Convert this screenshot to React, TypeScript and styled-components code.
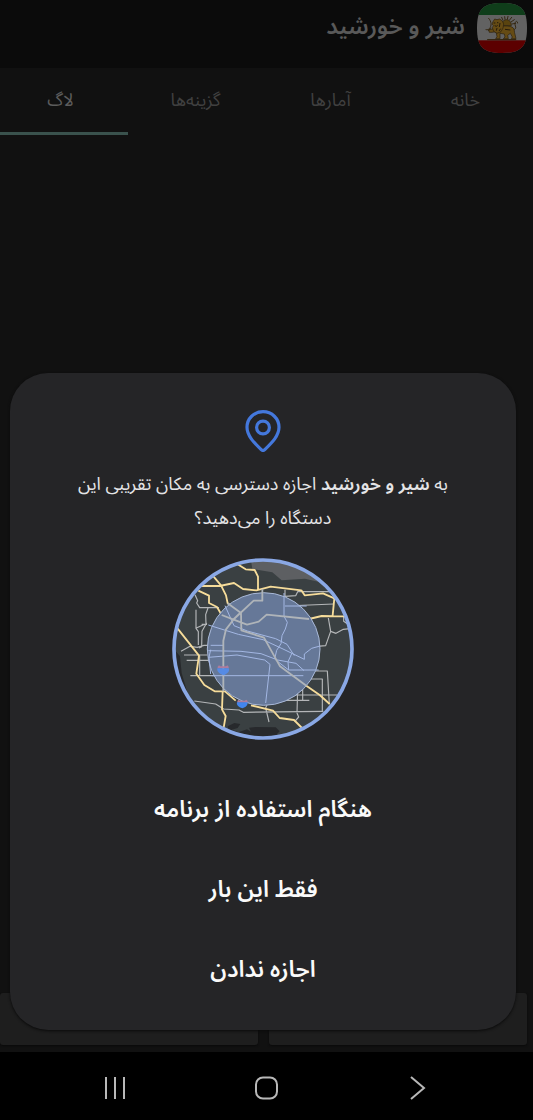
import React from "react";
import styled, { createGlobalStyle } from "styled-components";

const GlobalStyle = createGlobalStyle`
  * { box-sizing: border-box; }
  body {
    margin: 0;
    background: #111111;
    font-family: "Noto Sans Arabic", "Noto Sans", "DejaVu Sans", sans-serif;
  }
`;

const Screen = styled.div`
  position: relative;
  display: flex;
  flex-direction: column;
  min-height: 100vh;
  overflow: hidden;
  background: #111111;
`;

const AppBar = styled.header`
  display: flex;
  align-items: flex-start;
  gap: 12px;
  height: 68px;
  padding: 3px 6px 0;
  background: #0b0b0b;
`;

const AppTitle = styled.h1`
  margin: 0;
  font-size: 23px;
  line-height: 48px;
  font-weight: 600;
  color: #595959;
`;

const Tabs = styled.nav`
  display: grid;
  grid-template-columns: repeat(4, 1fr);
  height: 67px;
  margin-left: -7px;
`;

const Tab = styled.button<{ $active?: boolean }>`
  border: 0;
  border-bottom: 3px solid ${(p) => (p.$active ? "#3a524d" : "transparent")};
  padding: 0;
  background: none;
  font: inherit;
  font-size: 18px;
  line-height: 24px;
  color: ${(p) => (p.$active ? "#5c5c5c" : "#404040")};
`;

const LogArea = styled.main`
  flex: 1;
`;

const Actions = styled.div`
  display: flex;
  gap: 11px;
  padding: 0 6px 7px 0;
`;

const ActionButton = styled.button`
  flex: 1;
  height: 52px;
  border: 0;
  border-radius: 3px;
  background: #1e1e1e;
  box-shadow: 0 1px 2px #0a0a0a;
`;

const NavBar = styled.footer`
  display: flex;
  justify-content: space-between;
  align-items: center;
  height: 68px;
  padding: 4px 94px 0;
  background: #000000;
`;

const NavButton = styled.button`
  display: flex;
  justify-content: center;
  width: 44px;
  padding: 0;
  border: 0;
  background: none;
`;

const Dialog = styled.section`
  position: absolute;
  left: 10px;
  right: 17px;
  bottom: 90px;
  display: flex;
  flex-direction: column;
  align-items: center;
  padding: 37px 40px 20px;
  border-radius: 38px;
  background: #252527;
  box-shadow: 0 1px 3px #0a0a0a;
`;

const Message = styled.p`
  margin: 15px 0 23px;
  max-width: 400px;
  font-size: 18px;
  line-height: 34px;
  text-align: center;
  color: #e4e4e6;

  strong { font-weight: 600; }
`;

const Choices = styled.div`
  display: flex;
  flex-direction: column;
  align-self: stretch;
  margin-top: 30px;
`;

const Choice = styled.button`
  height: 80px;
  padding: 0;
  border: 0;
  background: none;
  font: inherit;
  font-size: 23px;
  line-height: 32px;
  font-weight: 600;
  color: #fafafa;
`;

const Logo = () => (
  <svg width="50" height="50" viewBox="0 0 150 150" aria-hidden="true">
    <defs>
      <clipPath id="badge">
        <path d="M75 0C132 0 150 18 150 75S132 150 75 150 0 132 0 75 18 0 75 0Z" />
      </clipPath>
    </defs>
    <g clipPath="url(#badge)">
      <rect width="150" height="150" fill="#626262" />
      <rect width="150" height="36" fill="#0f3d1a" />
      <rect y="112" width="150" height="38" fill="#5c0000" />
    </g>
    <g fill="none" stroke="#352711" strokeWidth="3" strokeLinecap="round">
      <path d="M78 52l-4-9M84 49l-1-8M91 49l2-9M97 52l7-9M102 57l10-7M105 63l11-2" />
      <path d="M35 46c9 9 9 23 3 30-3 4-7 5-11 4M34 82l8-6" />
      <path d="M110 80c13-3 2-12 4-20 2-7 9-6 8 0" />
      <path d="M32 110h84" strokeWidth="4" />
    </g>
    <path d="M76 68c-3-24 27-24 27 0Z" fill="#59430f" stroke="#2b200d" strokeWidth="2" />
    <g fill="#654b14" stroke="#2b200d" strokeWidth="2" strokeLinejoin="round">
      <path d="M70 70c15-2 30-2 38 4 6 6 3 14 6 20l3 13h-14l3-5-6-11-8 6 2 10H79l5-5-2-9-13-2v16H56l4-6-3-15-12 2-8 0-2-7 11-3 12-8Z" />
      <path d="M48 56l5-8 7 2 8-2 8 6 4 9-2 12-6 11-12 5-10-6-4-11 3-6-4-5Z" />
    </g>
    <path d="M50 60h5M60 59h4M53 68l5 2 4-3M60 75l-2 8M69 60l-2 12M71 77l-5 7M84 79l16 2" stroke="#241a0b" strokeWidth="3" fill="none" />
  </svg>
);

const PinIcon = () => (
  <svg width="36" height="42" viewBox="0 0 36 42" fill="none" stroke="#4478dc" strokeWidth="3.2" aria-hidden="true">
    <path d="M18 1.7C9 1.7 2 8.600 2 17.300c0 8.300 6.700 15 14.200 22.300q1.800 1.700 3.600 0C27.300 32.300 34 25.600 34 17.300 34 8.600 27 1.700 18 1.700Z" strokeLinejoin="round" />
    <circle cx="18" cy="17.500" r="6.400" />
  </svg>
);

const LocationMap = () => (
  <svg width="182" height="182" viewBox="21 25 546 546" role="img" aria-label="مکان تقریبی">
    <defs>
      <clipPath id="map">
        <circle cx="294" cy="298" r="266" />
      </clipPath>
    </defs>
    <g clipPath="url(#map)" fill="none" strokeLinejoin="round">
      <rect x="21" y="25" width="546" height="546" fill="#3a4042" />
      <path d="M256 20l6 38 60 10 28 24 70-5 70 16 60-20V20Z" fill="#5d5f62" />
      <path d="M20 290l25 30 5 50 22 75-42-20Z" fill="#27292c" />
      <path d="M188 530l20-10 18 3-8 12-18 5 20 8 26-9 12 7-6-12 20-2 60 1 12 12-8 8 8 8-30 8-80 5-40-14Z" fill="#27292c" />
      <g stroke="#b4b6b8" strokeWidth="3.500">
        <path d="M93 180v56l7 10v40M90 135l8 18-3 7 9 14h58M129 175l-7 20 1 28-12 22-1 46-8 4M92 236l34-15M110 224h16M76 378h340M65 332h65M57 316h70M48 305l27-15 22 3 20-6h55M104 318v58M88 454l64 9 24 15 46 3 13 7 240-3M300 452h133M342 436h175M413 378l-14 2-3 110 5 12-12 14M432 388h40v95M359 364h128l6 100M413 405v48M360 120v20l32-2 6-12h108M360 169l146-6M490 205l7 40-15 43-26 2M497 245l16 6 22-12 20-2M536 200v15l12 8M456 290l-36 20M306 465l-4 10 10 42" />
      </g>
      <g stroke="#f6dc9a" strokeWidth="5.500">
        <path d="M218 44l24 15 27 2 10 20v38M146 81l22 26 15 30 5 24 39 27M100 109h64l43-9 27 18 40 4 43-11 92 11 10 15 55-6 34 15-5 51M100 123l32 15v22l24 12 14 24 34 13M432 208l38-9 70 1M38 237l64 81-8 54 24 34 31 19h31l32 28M173 425l-2 54 11 20-6 35M258 467l66 16 20 22 43 6 24 24M424 408l40 28 30 27" />
      </g>
      <circle cx="296" cy="298" r="169" fill="#667898" stroke="#a9b9d8" strokeWidth="3" />
      <g stroke="#a3b7e3" strokeWidth="3">
        <path d="M357 130v70l10 18-6 20-10 20-3 24-13 20-6 26M360 169h65M180 168l27 60 40 16 85 23 34 17 22 34M130 226l90 28 74 16 60 28 64 31v-16l22-17 25-7M130 303l98 2 60 7 50 19 55 10 24 22M130 323l86-7 83 15 16 13-13 116M137 300l-5 23 5 50M137 287h40M381 310l-12 26 2 25-40-31M371 361h90M140 378h275" />
      </g>
      <g stroke="#afb4b9" strokeWidth="5.500">
        <path d="M292 118v35h-26l-59 55-24 31-8 34v152M170 196l34 13 42 16 35-9 24-21 127 13M188 161l40 29 1 52 68 22 48 86 79 58M227 188l-22 21" />
      </g>
      <g>
        <path d="M158 351l4-4 4 3h17l4-3 4 4v5h-33Z" fill="#ae7c9d" />
        <path d="M157 356h35c2 12-5 16-17 21-12-5-20-11-18-21Z" fill="#568be5" />
        <path d="M217 454l4-4 4 3h14l5-3 4 4v5h-31Z" fill="#ae7c9d" />
        <path d="M216 458h32c0 10-5 14-16 18-12-4-18-10-16-18Z" fill="#4285ee" />
      </g>
    </g>
    <circle cx="294" cy="298" r="267" fill="none" stroke="#8aa8e5" strokeWidth="11" />
  </svg>
);

export default function App() {
  return (
    <>
      <GlobalStyle />
      <Screen dir="rtl" lang="fa">
        <AppBar>
          <Logo />
          <AppTitle>شیر و خورشید</AppTitle>
        </AppBar>
        <Tabs>
          <Tab>خانه</Tab>
          <Tab>آمارها</Tab>
          <Tab>گزینه‌ها</Tab>
          <Tab $active>لاگ</Tab>
        </Tabs>
        <LogArea />
        <Actions>
          <ActionButton />
          <ActionButton />
        </Actions>
        <NavBar>
          <NavButton aria-label="بازگشت">
            <svg width="24" height="24" viewBox="0 0 24 24" fill="none" stroke="#b8b8b8" strokeWidth="2">
              <path d="M6 1l13 11L6 23" />
            </svg>
          </NavButton>
          <NavButton aria-label="صفحه اصلی">
            <svg width="24" height="24" viewBox="0 0 24 24" fill="none" stroke="#b8b8b8" strokeWidth="2">
              <rect x="1" y="1.500" width="21" height="21" rx="7" />
            </svg>
          </NavButton>
          <NavButton aria-label="برنامه‌های اخیر">
            <svg width="24" height="24" viewBox="0 0 24 24" fill="none" stroke="#b8b8b8" strokeWidth="2">
              <path d="M2 1v22M11 1v22M20 1v22" />
            </svg>
          </NavButton>
        </NavBar>
        <Dialog role="dialog" aria-modal="true" aria-labelledby="permission-message">
          <PinIcon />
          <Message id="permission-message">
            به <strong>شیر و خورشید</strong> اجازه دسترسی به مکان تقریبی این دستگاه را می‌دهید؟
          </Message>
          <LocationMap />
          <Choices>
            <Choice>هنگام استفاده از برنامه</Choice>
            <Choice>فقط این بار</Choice>
            <Choice>اجازه ندادن</Choice>
          </Choices>
        </Dialog>
      </Screen>
    </>
  );
}
